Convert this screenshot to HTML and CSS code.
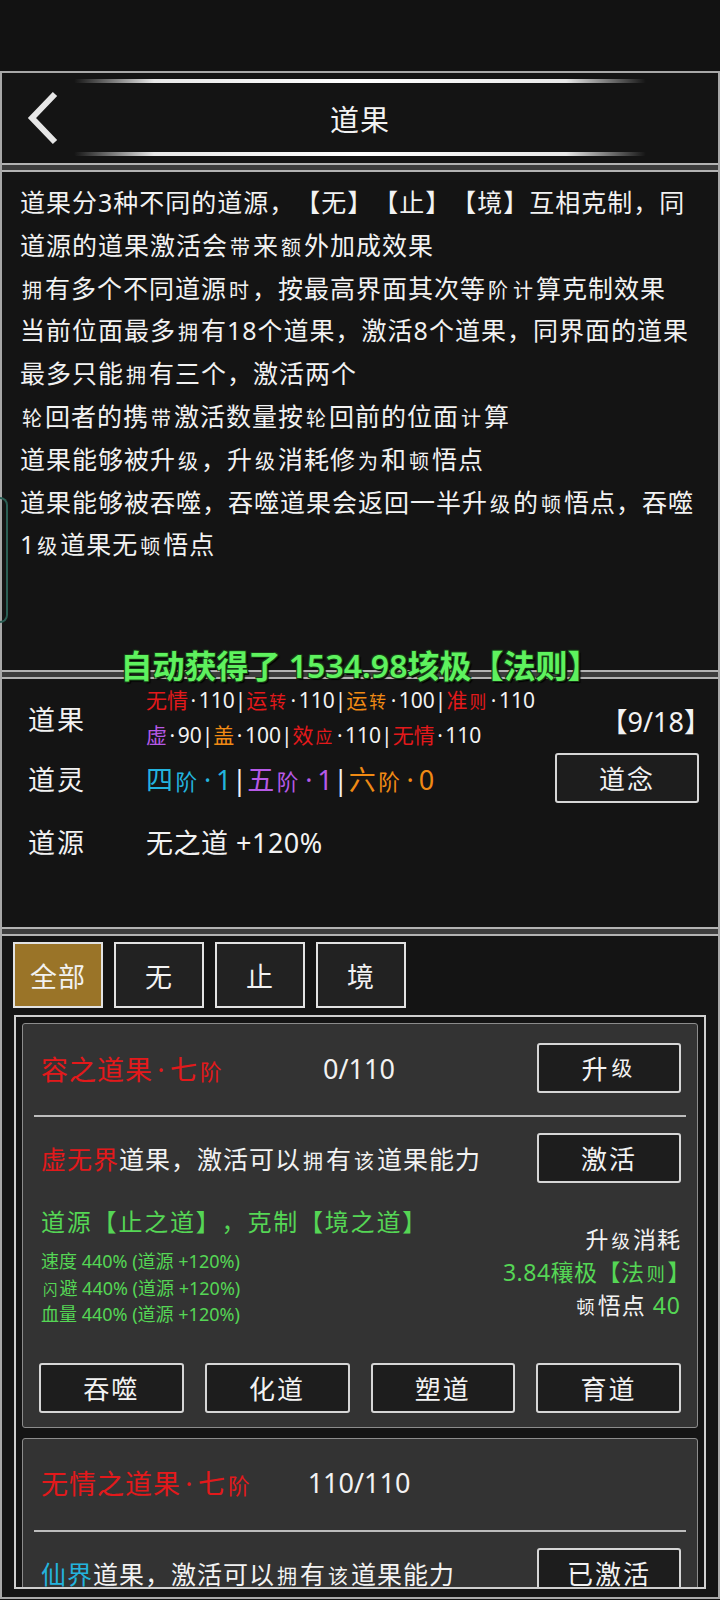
FILE: index.html
```html
<!DOCTYPE html>
<html>
  <head>
    <meta name="viewport" content="width=device-width, initial-scale=1.0">
    <link rel="stylesheet" href="styles.css">
  </head>
  <body>
    <div class="status-bar"></div>
    <div class="page">
      <div class="header">
        <div class="deco"></div>
        <div class="title-row">
          <svg class="back" width="40" height="54" viewBox="0 0 40 54">
            <polyline points="31,3 8,27 31,51" fill="none" stroke="#e6e6e6" stroke-width="6"/>
          </svg>
          <div class="title">道果</div>
          <div></div>
        </div>
        <div class="deco"></div>
      </div>
      <div class="sep"></div>

      <div class="info">
        <div class="line">道果分3种不同的道源，【无】【止】【境】互相克制，同</div>
        <div class="line">道源的道果激活会<span class="fb">带</span>来<span class="fb">额</span>外加成效果</div>
        <div class="line"><span class="fb">拥</span>有多个不同道源<span class="fb">时</span>，按最高界面其次等<span class="fb">阶</span><span class="fb">计</span>算克制效果</div>
        <div class="line">当前位面最多<span class="fb">拥</span>有18个道果，激活8个道果，同界面的道果</div>
        <div class="line">最多只能<span class="fb">拥</span>有三个，激活两个</div>
        <div class="line"><span class="fb">轮</span>回者的携<span class="fb">带</span>激活数量按<span class="fb">轮</span>回前的位面<span class="fb">计</span>算</div>
        <div class="line">道果能够被升<span class="fb">级</span>，升<span class="fb">级</span>消耗修<span class="fb">为</span>和<span class="fb">顿</span>悟点</div>
        <div class="line">道果能够被吞噬，吞噬道果会返回一半升<span class="fb">级</span>的<span class="fb">顿</span>悟点，吞噬</div>
        <div class="line">1<span class="fb">级</span>道果无<span class="fb">顿</span>悟点</div>
        <div class="side-handle"></div>
        <div class="toast">自动获得了 1534.98垓极【法则】</div>
      </div>
      <div class="sep"></div>

      <div class="stats">
        <div class="stat-label">道果</div>
        <div class="stat-lines">
          <div><span class="red">无情</span><span class="dot">·</span>110|<span class="red">运<span class="fb">转</span></span><span class="dot">·</span>110|<span class="orange">运<span class="fb">转</span></span><span class="dot">·</span>100|<span class="red">准<span class="fb">则</span></span><span class="dot">·</span>110</div>
          <div><span class="purple">虚</span><span class="dot">·</span>90|<span class="orange">盖</span><span class="dot">·</span>100|<span class="red">效<span class="fb">应</span></span><span class="dot">·</span>110|<span class="red">无情</span><span class="dot">·</span>110</div>
        </div>
        <div class="stat-count">【9/18】</div>

        <div class="stat-label">道灵</div>
        <div class="stat-value"><span class="cyan">四<span class="fb">阶</span><span class="dot">·</span>1</span>|<span class="purple">五<span class="fb">阶</span><span class="dot">·</span>1</span>|<span class="orange">六<span class="fb">阶</span><span class="dot">·</span>0</span></div>
        <div class="btn btn-stat">道念</div>

        <div class="stat-label stat-last">道源</div>
        <div class="stat-value stat-last">无之道 +120%</div>
        <div class="stat-last"></div>
      </div>
      <div class="sep"></div>

      <div class="tabs">
        <div class="tab active">全部</div>
        <div class="tab">无</div>
        <div class="tab">止</div>
        <div class="tab">境</div>
      </div>

      <div class="list">
        <div class="card">
          <div class="card-head">
            <div class="red">容之道果<span class="dot">·</span>七<span class="fb">阶</span></div>
            <div class="count">0/110</div>
            <div class="btn btn-card">升<span class="fb">级</span></div>
          </div>
          <div class="divider"></div>
          <div class="card-row">
            <div><span class="red">虚无界</span>道果，激活可以<span class="fb">拥</span>有<span class="fb">该</span>道果能力</div>
            <div class="btn btn-card">激活</div>
          </div>
          <div class="card-body">
            <div class="effects">
              <div class="effect-title">道源【止之道】，克制【境之道】</div>
              <div class="effect-list">
                <div>速度 440% (道源 +120%)</div>
                <div><span class="fb">闪</span>避 440% (道源 +120%)</div>
                <div>血量 440% (道源 +120%)</div>
              </div>
            </div>
            <div class="cost">
              <div>升<span class="fb">级</span>消耗</div>
              <div class="green cost-price">3.84穰极【法<span class="fb">则</span>】</div>
              <div><span class="fb">顿</span>悟点 <span class="green">40</span></div>
            </div>
          </div>
          <div class="card-actions">
            <div class="btn">吞噬</div>
            <div class="btn">化道</div>
            <div class="btn">塑道</div>
            <div class="btn">育道</div>
          </div>
        </div>

        <div class="card">
          <div class="card-head">
            <div class="red">无情之道果<span class="dot">·</span>七<span class="fb">阶</span></div>
            <div class="count">110/110</div>
            <div class="btn-space"></div>
          </div>
          <div class="divider"></div>
          <div class="card-row">
            <div><span class="cyan">仙界</span>道果，激活可以<span class="fb">拥</span>有<span class="fb">该</span>道果能力</div>
            <div class="btn btn-card">已激活</div>
          </div>
        </div>
      </div>
    </div>
  </body>
</html>
```

FILE: styles.css
```css
/* Base */
* {
  box-sizing: border-box;
}

body {
  margin: 0;
  width: 720px;
  height: 1600px;
  overflow: hidden;
  background-color: #121212;
  color: #f2f2f2;
  font-family: "Noto Sans", "Noto Sans CJK SC", sans-serif;
  text-spacing-trim: space-all;
}

.status-bar {
  height: 71px;
  background-color: #121212;
}

.page {
  border: 2px solid #a8a8a8;
  background-color: #141414;
  padding-bottom: 8px;
}

/* Fallback glyphs drawn smaller, like the game does */
.fb {
  font-size: 0.8em;
  line-height: 1;
  padding: 0 2px;
}

.dot {
  padding: 0 0.16em;
}

.red { color: #e3191b; }
.orange { color: #f08a14; }
.purple { color: #b659e6; }
.cyan { color: #23b3de; }
.green { color: #55d655; }

/* Header */
.header {
  height: 90px;
  padding-top: 6px;
}

.deco {
  height: 4px;
  margin: 0 72px;
  border-radius: 2px;
  background: linear-gradient(90deg, rgba(255,255,255,0) 0%, rgba(170,170,170,0.5) 5%, #e8e8e8 14%, #ffffff 50%, #e8e8e8 86%, rgba(170,170,170,0.5) 95%, rgba(255,255,255,0) 100%);
}

.title-row {
  height: 69px;
  display: grid;
  grid-template-columns: 1fr auto 1fr;
  align-items: center;
}

.back {
  margin-left: 22px;
  display: block;
}

.title {
  font-size: 29px;
  letter-spacing: 1px;
}

.sep {
  height: 9px;
  border-top: 2px solid #b3b3b3;
  border-bottom: 2px solid #b3b3b3;
  background-color: #3d3d3d;
}

/* Info text */
.info {
  position: relative;
  height: 498px;
  padding: 9px 0 0 18px;
  font-size: 25px;
  letter-spacing: 1px;
  line-height: 42.8px;
}

.line {
  white-space: nowrap;
}

.side-handle {
  position: absolute;
  left: -2px;
  top: 325px;
  width: 8px;
  height: 126px;
  border: 2px solid #2c5f55;
  border-left: none;
  border-radius: 0 9px 9px 0;
}

.toast {
  position: absolute;
  left: 0;
  right: 0;
  bottom: -16px;
  z-index: 2;
  text-align: center;
  font-size: 32px;
  font-weight: 600;
  line-height: 40px;
  letter-spacing: 0;
  color: #5ef25e;
  text-shadow: 1px 1px 0 #173a17, -1px -1px 0 #173a17, 1px -1px 0 #173a17, -1px 1px 0 #173a17, 2px 2px 1px #000;
}

/* Stats */
.stats {
  height: 248px;
  padding: 4px 19px 0 26px;
  display: grid;
  grid-template-columns: 118px minmax(0, 1fr) auto;
  grid-template-rows: 70px 50px 58px;
  align-items: center;
  font-size: 27px;
  letter-spacing: 1px;
}

.stat-label {
  letter-spacing: 2px;
}

.stat-lines {
  font-size: 21px;
  line-height: 35px;
  letter-spacing: 0;
  white-space: nowrap;
}

.stat-lines .dot {
  padding: 0 0.12em;
}

.stat-count {
  padding-top: 4px;
  justify-self: end;
  margin-right: -12px;
  letter-spacing: 0;
}

.stat-value {
  white-space: nowrap;
  letter-spacing: 0.5px;
}

.stat-last {
  align-self: end;
}

/* Buttons */
.btn {
  height: 50px;
  border: 2px solid #d6d6d6;
  border-radius: 3px;
  background-color: #1d1d1d;
  color: #f2f2f2;
  font-size: 26px;
  letter-spacing: 2px;
  display: flex;
  align-items: center;
  justify-content: center;
}

.btn-stat {
  width: 144px;
}

.btn-card {
  width: 144px;
  justify-self: end;
}

.btn-space {
  height: 50px;
}

/* Tabs */
.tabs {
  display: flex;
  gap: 11px;
  padding: 6px 11px 7px;
}

.tab {
  width: 90px;
  height: 66px;
  border: 2px solid #e2e2e2;
  background-color: #222222;
  font-size: 27px;
  letter-spacing: 1px;
  display: flex;
  align-items: center;
  justify-content: center;
}

.tab.active {
  background-color: #9a7428;
}

/* List */
.list {
  height: 574px;
  margin: 0 12px;
  padding: 6px;
  border: 2px solid #cfcfcf;
  overflow: hidden;
  display: flex;
  flex-direction: column;
  gap: 10px;
}

.card {
  flex-shrink: 0;
  background-color: #333333;
  border: 1px solid #8c8c8c;
  border-radius: 3px;
  padding: 19px 16px 14px 18px;
  font-size: 25px;
  letter-spacing: 1px;
}

.card-head {
  display: grid;
  grid-template-columns: 1fr auto 1fr;
  align-items: center;
  font-size: 27px;
}

.count {
  letter-spacing: 0;
  margin-right: 4px;
}

.divider {
  height: 2px;
  margin: 22px -5px 0 -7px;
  background-color: #bdbdbd;
}

.card-row {
  margin-top: 16px;
  display: flex;
  align-items: center;
  justify-content: space-between;
  white-space: nowrap;
}

.card-body {
  margin-top: 22px;
  display: flex;
  justify-content: space-between;
}

.effect-title {
  color: #55d655;
  font-size: 24px;
  letter-spacing: 1.8px;
  line-height: 34px;
}

.effect-list {
  margin-top: 9px;
  color: #55d655;
  font-size: 18px;
  line-height: 26.5px;
  letter-spacing: 0;
}

.cost {
  margin-top: 18px;
  text-align: right;
  font-size: 23px;
  line-height: 33px;
}

.cost-price {
  margin-right: -10px;
  letter-spacing: 0.5px;
}

.card-actions {
  margin-top: 35px;
  margin-left: -2px;
  display: grid;
  grid-template-columns: repeat(4, 1fr);
  gap: 21px;
}
```
